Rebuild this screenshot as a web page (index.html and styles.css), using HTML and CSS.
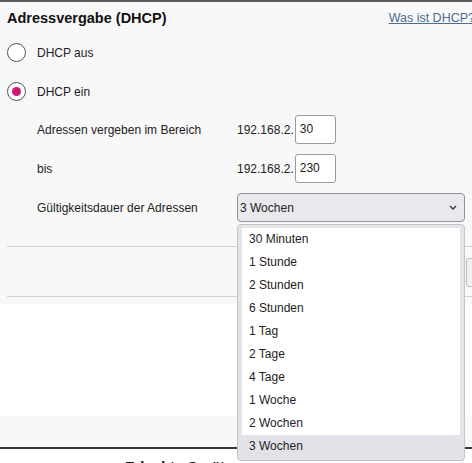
FILE: index.html
```html
<!DOCTYPE html>
<html lang="de">
<head>
    <meta charset="UTF-8">
    <title>Adressvergabe (DHCP)</title>
    <link rel="stylesheet" href="styles.css">
</head>
<body>
    <div class="page">
        <!-- DHCP Einstellungen -->
        <section class="panel">
            <div class="panel-head">
                <h2>Adressvergabe (DHCP)</h2>
                <a href="#" class="help-link">Was ist DHCP?</a>
            </div>

            <label class="radio-row">
                <span class="radio"></span>
                <span>DHCP aus</span>
            </label>
            <label class="radio-row">
                <span class="radio checked"></span>
                <span>DHCP ein</span>
            </label>

            <div class="form-grid">
                <div class="label">Adressen vergeben im Bereich</div>
                <div class="value">192.168.2.<span class="ip-box">30</span></div>

                <div class="label">bis</div>
                <div class="value">192.168.2.<span class="ip-box">230</span></div>

                <div class="label">Gültigkeitsdauer der Adressen</div>
                <div class="value select-wrap">
                    <div class="select">
                        <span>3 Wochen</span>
                        <svg class="chevron" width="8" height="5" viewBox="0 0 8 5">
                            <path d="M1 1 L4 4 L7 1" fill="none" stroke="#333" stroke-width="1.3"/>
                        </svg>
                    </div>
                    <!-- Aufgeklappte Liste -->
                    <ul class="select-list">
                        <li>30 Minuten</li>
                        <li>1 Stunde</li>
                        <li>2 Stunden</li>
                        <li>6 Stunden</li>
                        <li>1 Tag</li>
                        <li>2 Tage</li>
                        <li>4 Tage</li>
                        <li>1 Woche</li>
                        <li>2 Wochen</li>
                        <li class="selected">3 Wochen</li>
                    </ul>
                </div>
            </div>

            <div class="actions">
                <button type="button" class="btn" title="Übernehmen"></button>
            </div>
        </section>

        <div class="spacer"></div>
        <div class="band"></div>
        <h3 class="next-title">Erlaubte Geräte</h3>
    </div>
</body>
</html>
```

FILE: styles.css
```css
html, body {
    margin: 0;
    overflow: hidden;
}

body {
    font-family: "Liberation Sans", Arial, sans-serif;
    font-size: 12px;
    color: #222;
    background: #fff;
}

.page {
    border-top: 2px solid #5c5c5c;
}

.panel {
    background-color: #f8f8f8;
    padding: 0 0 7px 0;
}

.panel-head {
    display: flex;
    justify-content: space-between;
    align-items: center;
    height: 31px;
    padding-left: 7px;
    margin-right: -3px;
}

.panel-head h2 {
    margin: 0;
    font-size: 14.5px;
    font-weight: bold;
    color: #111;
}

.help-link {
    color: #4b6d92;
    font-size: 12.5px;
}

.radio-row {
    display: flex;
    align-items: center;
    gap: 11px;
    height: 39px;
    padding-left: 7px;
}

.radio {
    width: 17px;
    height: 17px;
    border: 1.5px solid #555;
    border-radius: 50%;
    background: #fff;
    display: flex;
    align-items: center;
    justify-content: center;
}

.radio.checked::after {
    content: "";
    width: 9px;
    height: 9px;
    border-radius: 50%;
    background: #d1167b;
}

.form-grid {
    display: grid;
    grid-template-columns: 200px 228px;
    grid-auto-rows: 29px;
    row-gap: 10px;
    align-items: center;
    padding-left: 37px;
    margin-top: 4px;
}

.value {
    display: flex;
    align-items: center;
    height: 29px;
}

.ip-box {
    box-sizing: border-box;
    width: 41px;
    height: 29px;
    margin-left: 1px;
    padding: 6px 4px;
    border: 1px solid #9a9a9a;
    border-radius: 3px;
    background: #fff;
}

.select-wrap {
    position: relative;
}

.select {
    box-sizing: border-box;
    width: 228px;
    height: 29px;
    display: flex;
    align-items: center;
    justify-content: space-between;
    padding: 0 7px 0 2px;
    border: 1px solid #8f8f9d;
    border-radius: 4px;
    background: #e9e9ed;
}

/* Popup der Auswahlliste */
.select-list {
    position: absolute;
    top: 31px;
    left: 0;
    z-index: 10;
    box-sizing: border-box;
    width: 228px;
    margin: 0;
    padding: 3px 4px 2px 4px;
    list-style: none;
    background: #e4e4e8;
    border: 1px solid #c4c4c8;
    border-radius: 4px;
}

.select-list li {
    height: 23px;
    line-height: 23px;
    padding-left: 7px;
    background: #fff;
}

.select-list li.selected {
    background: #e2e2e8;
}

.actions {
    margin-top: 24px;
    margin-left: 7px;
    border-top: 1px solid #d0d0d0;
    border-bottom: 1px solid #d0d0d0;
    padding: 11px 0 9px 0;
    display: flex;
    justify-content: flex-end;
}

.btn {
    height: 29px;
    width: 110px;
    margin-right: -104px;
    background: #f0f0f0;
    border: 1px solid #bdbdbd;
    border-radius: 3px;
}

.spacer {
    height: 112px;
    background: #fff;
}

.band {
    height: 31px;
    background: #f8f8f8;
    border-bottom: 2px solid #3a3a3a;
}

.next-title {
    margin: 10px 0 0 0;
    padding-left: 125px;
    font-size: 14.5px;
    font-weight: bold;
    color: #111;
}
```
